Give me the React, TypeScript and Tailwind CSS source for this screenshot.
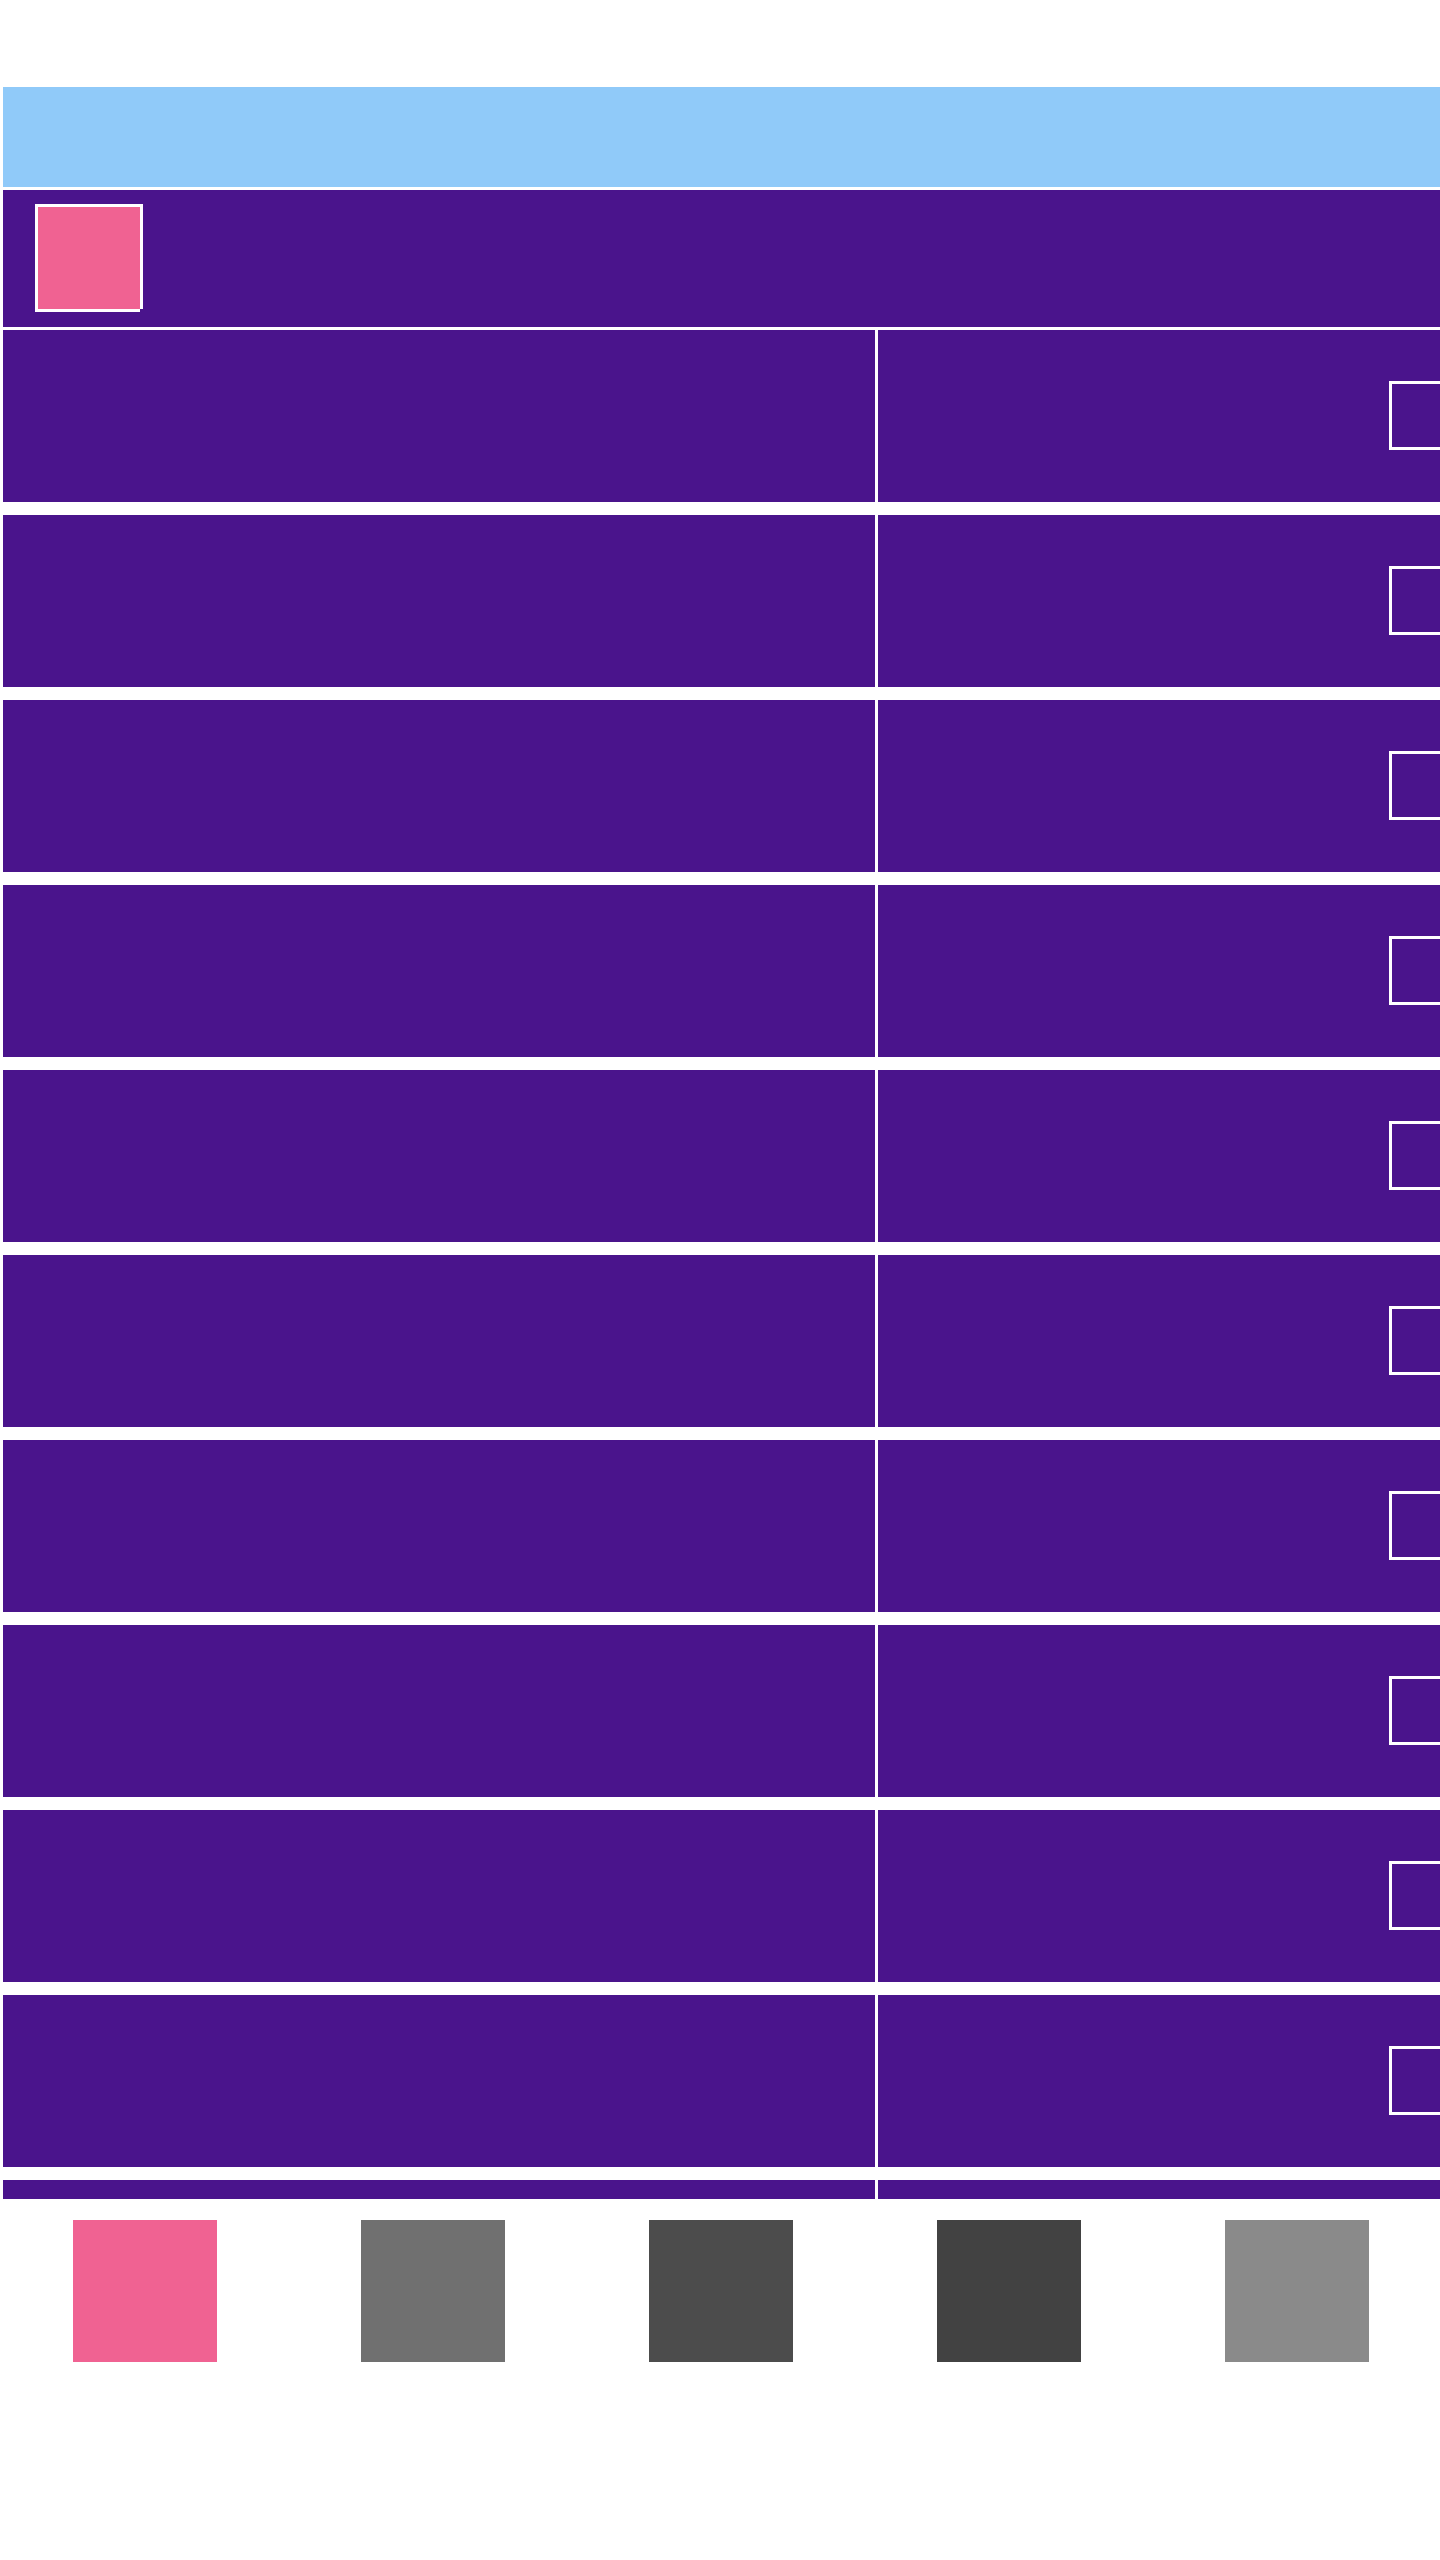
const rows = Array.from({ length: 12 }, (_, i) => i + 1);

const tabs = [
  { label: "Home", color: "bg-[#f06292]" },
  { label: "Search", color: "bg-[#707070]" },
  { label: "Lists", color: "bg-[#4c4c4c]" },
  { label: "Activity", color: "bg-[#424242]" },
  { label: "Profile", color: "bg-[#8a8a8a]" },
];

function Header() {
  return (
    <header className="shrink-0 border-l-[3px] border-white pt-[87px]">
      <div className="h-[100px] bg-[#90caf9]" />
      <div className="border-y-[3px] border-white bg-[#4a148c] px-8 pt-3.5 pb-[15px]">
        <button
          type="button"
          aria-label="Menu"
          className="relative block size-[108px] border-[3px] border-white bg-[#f06292] after:absolute after:-right-[3px] after:-bottom-[3px] after:size-[3px] after:bg-[#4a148c]"
        />
      </div>
    </header>
  );
}

function Row({ index }: { index: number }) {
  return (
    <li className="grid h-[172px] grid-cols-[439fr_281fr]">
      <div className="border-x-[3px] border-white bg-[#4a148c]" />
      <div className="flex items-start justify-end overflow-hidden bg-[#4a148c] pt-[51px]">
        <input
          type="checkbox"
          aria-label={`Select item ${index}`}
          className="-mr-[18px] size-[69px] shrink-0 appearance-none border-[3px] border-white bg-transparent checked:bg-[#f06292]"
        />
      </div>
    </li>
  );
}

function TabBar() {
  return (
    <nav className="grid shrink-0 grid-cols-5 pt-[21px] pb-[198px]">
      {tabs.map((tab) => (
        <div key={tab.label} className="flex justify-center pl-0.5">
          <button
            type="button"
            aria-label={tab.label}
            className={`h-[142px] w-36 ${tab.color}`}
          />
        </div>
      ))}
    </nav>
  );
}

export default function App() {
  return (
    <div className="flex h-screen flex-col bg-white">
      <Header />
      <main className="min-h-0 flex-1 overflow-x-hidden overflow-y-auto [scrollbar-width:none]">
        <ul className="flex flex-col gap-[13px]">
          {rows.map((index) => (
            <Row key={index} index={index} />
          ))}
        </ul>
      </main>
      <TabBar />
    </div>
  );
}
